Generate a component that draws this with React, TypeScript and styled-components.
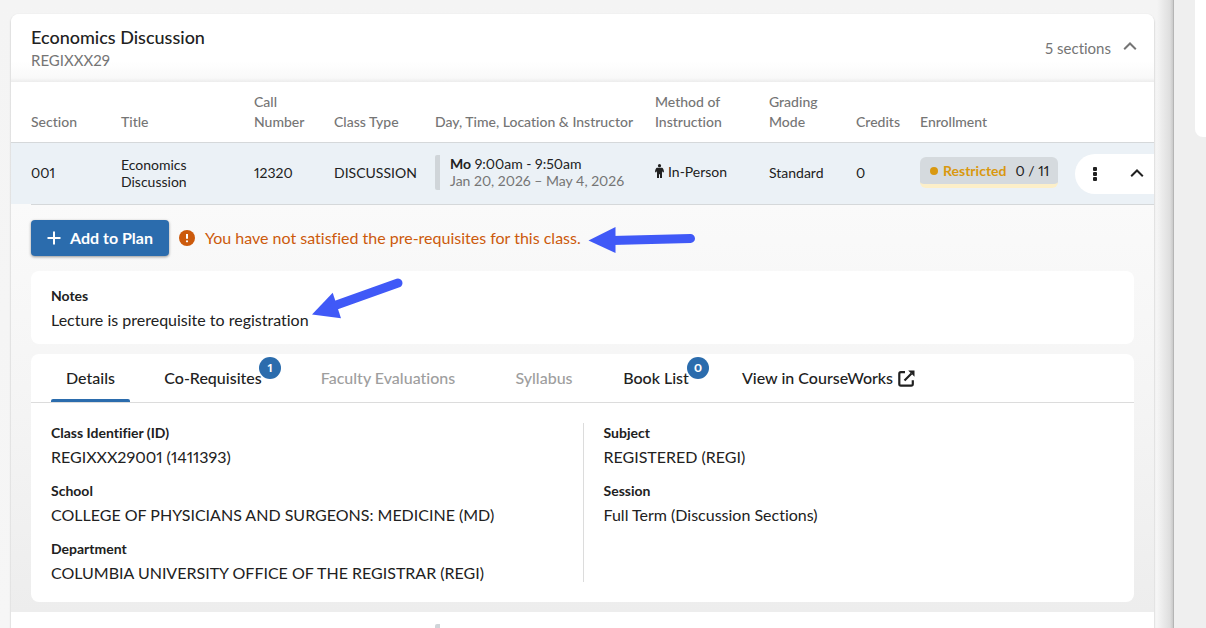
import React from "react";
import styled, { createGlobalStyle } from "styled-components";

const GlobalStyle = createGlobalStyle`
  * { box-sizing: border-box; }
  html, body, #root { height: 100%; }
  body {
    margin: 0;
    overflow: hidden;
    font-family: Lato, "Open Sans", sans-serif;
    font-size: 16px;
    font-variant-ligatures: none;
    font-variant-numeric: proportional-nums;
    color: #212121;
    background: #efefef;
  }
  button { font: inherit; font-variant-ligatures: none; color: inherit; border: 0; background: none; padding: 0; cursor: pointer; }
`;

const Page = styled.div`
  position: relative;
  display: flex;
  height: 100%;
  overflow: hidden;
`;

const Main = styled.main`
  flex: 1;
  min-width: 0;
  padding: 14px 19px 0 11px;
  overflow: hidden;
  background:
    linear-gradient(to left, #c9c9c9 0, #dedede 3px, rgba(238, 238, 238, 0) 16px),
    linear-gradient(#f4f4f4, #f6f6f6);
  border-right: 1px solid #b5b5b5;
`;

const Side = styled.aside`
  flex: 0 0 32px;
  padding-left: 21px;
  background: #efefef;
`;

const SideCard = styled.div`
  height: 137px;
  background: #fff;
  border-bottom-left-radius: 8px;
`;

const Card = styled.section`
  background: #fff;
  border-radius: 8px 8px 0 0;
  box-shadow: 0 1px 2px rgba(0, 0, 0, 0.28);
  min-height: 100vh;
`;

const CardHeader = styled.header`
  display: flex;
  justify-content: space-between;
  align-items: center;
  height: 68px;
  padding: 0 17px 0 20px;
  border-radius: 8px 8px 0 0;
  background: linear-gradient(#fff 70%, #f9f9f9 94%, #ececec 100%);
`;

const CourseTitle = styled.h2`
  margin: 0;
  font-size: 18px;
  line-height: 24px;
  font-weight: 500;
`;

const Muted = styled.div`
  font-size: 15px;
  line-height: 22px;
  color: #757575;
`;

const ToggleSections = styled.button`
  display: flex;
  align-items: flex-start;
  gap: 12px;
  font-size: 15px;
  line-height: 18px;
  color: #757575;
  svg { margin-top: 3px; }
`;

const Table = styled.table`
  width: 100%;
  table-layout: fixed;
  border-collapse: separate;
  border-spacing: 0;
  font-size: 14px;
`;

const Col = styled.col<{ $w?: number }>`
  width: ${(p) => (p.$w ? `${p.$w}px` : "auto")};
`;

const Th = styled.th`
  padding: 10px 0 10px 20px;
  text-align: left;
  vertical-align: bottom;
  font-weight: 500;
  line-height: 20px;
  color: #757575;
  border-bottom: 1px solid #d5d8da;
`;

const Td = styled.td`
  height: 61px;
  padding: 0 0 2px 20px;
  line-height: 17px;
  background: #ebf1f6;
  white-space: nowrap;
`;

const TdWrap = styled(Td)`
  white-space: normal;
`;

const TdActions = styled(Td)`
  overflow: hidden;
  padding-bottom: 0;
`;

const NextTd = styled(Td)`
  background: #fff;
`;

const Meeting = styled.div`
  min-height: 35px;
  padding-left: 10px;
  border-left: 5px solid #d0d5d9;
  border-radius: 2px;
`;

const Dates = styled.div`
  color: #757575;
`;

const Inline = styled.span`
  display: inline-flex;
  align-items: center;
  gap: 4px;
`;

const Enrollment = styled.div`
  display: inline-flex;
  align-items: center;
  gap: 9px;
  height: 31px;
  padding: 0 9px 0 10px;
  background: #d5dade;
  border-bottom: 4px solid #fcefc9;
  border-radius: 6px;
`;

const Restricted = styled.strong`
  display: inline-flex;
  align-items: center;
  gap: 5px;
  color: #d9980f;
  &::before {
    content: "";
    width: 8px;
    height: 8px;
    border-radius: 50%;
    background: #d9980f;
  }
`;

const Actions = styled.div`
  display: flex;
  align-items: center;
  justify-content: space-between;
  height: 40px;
  padding: 0 10px 0 18px;
  background: #fff;
  border-radius: 20px 0 0 20px;
`;

const IconButton = styled.button`
  display: flex;
`;

const ExpandedCell = styled.td`
  padding: 0 20px 10px;
  background: linear-gradient(#fafafa, #f5f5f5 45%, #ededed);
  &::before {
    content: "";
    display: block;
    height: 1px;
    margin-right: -20px;
    background: #d5d8da;
  }
`;

const PlanRow = styled.div`
  display: flex;
  align-items: center;
  padding: 15px 0;
`;

const AddButton = styled.button`
  display: flex;
  align-items: center;
  justify-content: center;
  gap: 9px;
  width: 138px;
  height: 36px;
  margin-right: 10px;
  font-size: 16px;
  line-height: 18px;
  font-weight: 700;
  color: #fff;
  background: #2b6cad;
  border-radius: 4px;
  box-shadow: 0 1px 3px rgba(0, 0, 0, 0.4);
`;

const Warning = styled.p`
  display: flex;
  align-items: center;
  gap: 10px;
  margin: 0;
  padding-bottom: 1px;
  font-size: 16px;
  line-height: 18px;
  color: #cc5a0c;
`;

const Panel = styled.section`
  margin-bottom: 10px;
  background: #fff;
  border-radius: 8px;
  &:last-child { margin-bottom: 0; }
`;

const Notes = styled(Panel)`
  padding: 15px 20px;
`;

const Label = styled.dt`
  font-size: 14px;
  line-height: 20px;
  font-weight: 700;
`;

const Value = styled.dd`
  margin: 4px 0 0;
  font-size: 16px;
  line-height: 19px;
`;

const List = styled.dl`
  display: flex;
  flex-direction: column;
  gap: 15px;
  margin: 0;
`;

const Tabs = styled.nav`
  display: flex;
  gap: 20px;
  height: 49px;
  padding: 0 20px;
  border-bottom: 1px solid #dcdcdc;
`;

const Tab = styled.button<{ $w: number; $active?: boolean }>`
  position: relative;
  display: flex;
  align-items: center;
  justify-content: center;
  gap: 5px;
  flex: 0 0 ${(p) => p.$w}px;
  height: 48px;
  font-size: 16px;
  line-height: 18px;
  font-weight: 500;
  white-space: nowrap;
  color: inherit;
  text-decoration: none;
  &:disabled { color: #9e9e9e; cursor: default; }
  &::after {
    content: "";
    position: absolute;
    left: 0;
    right: 0;
    bottom: 0;
    height: 3px;
    border-radius: 2px 2px 0 0;
    background: ${(p) => (p.$active ? "#2b6cad" : "transparent")};
  }
`;

const Badge = styled.span`
  position: absolute;
  top: 3px;
  right: -5px;
  width: 22px;
  height: 22px;
  border-radius: 50%;
  font-size: 12px;
  line-height: 22px;
  font-weight: 900;
  text-align: center;
  color: #fff;
  background: #2b6cad;
`;

const DetailGrid = styled.div`
  display: grid;
  grid-template-columns: 1fr 1fr;
  padding: 20px;
  & > dl + dl {
    padding-left: 20px;
    border-left: 1px solid #dcdcdc;
  }
`;

const Annotations = styled.svg`
  position: absolute;
  left: 0;
  top: 0;
  pointer-events: none;
`;

const Chevron = () => (
  <svg width="14" height="9" viewBox="0 0 14 9" fill="none" stroke="currentColor" strokeWidth="2" aria-hidden="true">
    <path d="M1.200 7.200 7 1.500l5.800 5.700" />
  </svg>
);

const Person = () => (
  <svg width="9" height="15" viewBox="0 0 9 15" fill="currentColor" aria-hidden="true">
    <circle cx="4.500" cy="1.700" r="1.600" />
    <path d="M2 3.800h5c.8 0 1.900 1.500 2 4.500H7.600L7 6.700V14H5v-3.700H4V14H2V6.700l-.6 1.600H0c.1-3 1.200-4.500 2-4.500z" />
  </svg>
);

const External = () => (
  <svg width="17" height="17" viewBox="0 0 17 17" fill="none" stroke="currentColor" strokeWidth="2.200" aria-hidden="true">
    <path d="M7 2.200H2.900C2 2.200 1.300 2.900 1.300 3.800v10.300c0 .9.700 1.600 1.600 1.600h10.300c.9 0 1.600-.7 1.600-1.600V10.200M6.500 10.500 13.500 3.500" />
    <path d="M10.200.5h6.300v6.300z" fill="currentColor" stroke="none" />
  </svg>
);

const columns: { label: string; w?: number }[] = [
  { label: "Section", w: 90 },
  { label: "Title" },
  { label: "Call Number", w: 80 },
  { label: "Class Type", w: 101 },
  { label: "Day, Time, Location & Instructor", w: 220 },
  { label: "Method of Instruction", w: 114 },
  { label: "Grading Mode", w: 87 },
  { label: "Credits", w: 64 },
  { label: "Enrollment", w: 155 },
  { label: "", w: 99 },
];

const leftDetails = [
  ["Class Identifier (ID)", "REGIXXX29001 (1411393)"],
  ["School", "COLLEGE OF PHYSICIANS AND SURGEONS: MEDICINE (MD)"],
  ["Department", "COLUMBIA UNIVERSITY OFFICE OF THE REGISTRAR (REGI)"],
];
const rightDetails = [
  ["Subject", "REGISTERED (REGI)"],
  ["Session", "Full Term (Discussion Sections)"],
];

const Details = ({ items }: { items: string[][] }) => (
  <List>
    {items.map(([label, value]) => (
      <div key={label}>
        <Label>{label}</Label>
        <Value>{value}</Value>
      </div>
    ))}
  </List>
);

export default function App() {
  return (
    <Page>
      <GlobalStyle />
      <Main>
        <Card>
          <CardHeader>
            <div>
              <CourseTitle>Economics Discussion</CourseTitle>
              <Muted>REGIXXX29</Muted>
            </div>
            <ToggleSections>
              5 sections
              <Chevron />
            </ToggleSections>
          </CardHeader>
          <Table>
            <colgroup>
              {columns.map((c) => (
                <Col key={c.label} $w={c.w} />
              ))}
            </colgroup>
            <thead>
              <tr>
                {columns.map((c) => (
                  <Th key={c.label} scope="col">{c.label}</Th>
                ))}
              </tr>
            </thead>
            <tbody>
              <tr>
                <Td>001</Td>
                <TdWrap>Economics Discussion</TdWrap>
                <Td>12320</Td>
                <Td>DISCUSSION</Td>
                <Td>
                  <Meeting>
                    <div><strong>Mo</strong> 9:00am - 9:50am</div>
                    <Dates>Jan 20, 2026 – May 4, 2026</Dates>
                  </Meeting>
                </Td>
                <Td><Inline><Person />In-Person</Inline></Td>
                <Td>Standard</Td>
                <Td>0</Td>
                <Td>
                  <Enrollment>
                    <Restricted>Restricted</Restricted>
                    <span>0 / 11</span>
                  </Enrollment>
                </Td>
                <TdActions>
                  <Actions>
                    <IconButton aria-label="More actions">
                      <svg width="4" height="14" viewBox="0 0 4 14" fill="currentColor">
                        <rect width="4" height="4" rx="1" />
                        <rect y="5" width="4" height="4" rx="1" />
                        <rect y="10" width="4" height="4" rx="1" />
                      </svg>
                    </IconButton>
                    <IconButton aria-label="Collapse section"><Chevron /></IconButton>
                  </Actions>
                </TdActions>
              </tr>
              <tr>
                <ExpandedCell colSpan={10}>
                  <PlanRow>
                    <AddButton>
                      <svg width="14" height="14" viewBox="0 0 14 14" stroke="currentColor" strokeWidth="2" aria-hidden="true">
                        <path d="M7 0.500v13M.5 7h13" />
                      </svg>
                      Add to Plan
                    </AddButton>
                    <Warning>
                      <svg width="16" height="16" viewBox="0 0 16 16" aria-hidden="true">
                        <circle cx="8" cy="8" r="8" fill="#cc5a0c" />
                        <path d="M8 4v4.700" stroke="#fff" strokeWidth="2" />
                        <circle cx="8" cy="11.300" r="1.100" fill="#fff" />
                      </svg>
                      You have not satisfied the pre-requisites for this class.
                    </Warning>
                  </PlanRow>
                  <Notes>
                    <Details items={[["Notes", "Lecture is prerequisite to registration"]]} />
                  </Notes>
                  <Panel>
                    <Tabs aria-label="Class information">
                      <Tab $w={79} $active>Details</Tab>
                      <Tab $w={126}>Co-Requisites<Badge>1</Badge></Tab>
                      <Tab $w={184} disabled>Faculty Evaluations</Tab>
                      <Tab $w={88} disabled>Syllabus</Tab>
                      <Tab $w={96}>Book List<Badge>0</Badge></Tab>
                      <Tab as="a" href="#courseworks" $w={209}>View in CourseWorks<External /></Tab>
                    </Tabs>
                    <DetailGrid>
                      <Details items={leftDetails} />
                      <Details items={rightDetails} />
                    </DetailGrid>
                  </Panel>
                </ExpandedCell>
              </tr>
              <tr>
                <NextTd colSpan={4} />
                <NextTd><Meeting /></NextTd>
                <NextTd colSpan={5} />
              </tr>
            </tbody>
          </Table>
        </Card>
      </Main>
      <Side><SideCard /></Side>
      <Annotations width="720" height="340" viewBox="0 0 720 340" fill="#4059f7" stroke="#4059f7" aria-hidden="true">
        <path d="M588.500 240.500 615.500 227v26z" stroke="none" />
        <path d="M612 240.500 690.500 238.500" strokeWidth="9" strokeLinecap="round" />
        <path d="M312 314.500 332.700 292.700 341 318.300z" stroke="none" />
        <path d="M335 305.500 398 283" strokeWidth="9" strokeLinecap="round" />
      </Annotations>
    </Page>
  );
}
